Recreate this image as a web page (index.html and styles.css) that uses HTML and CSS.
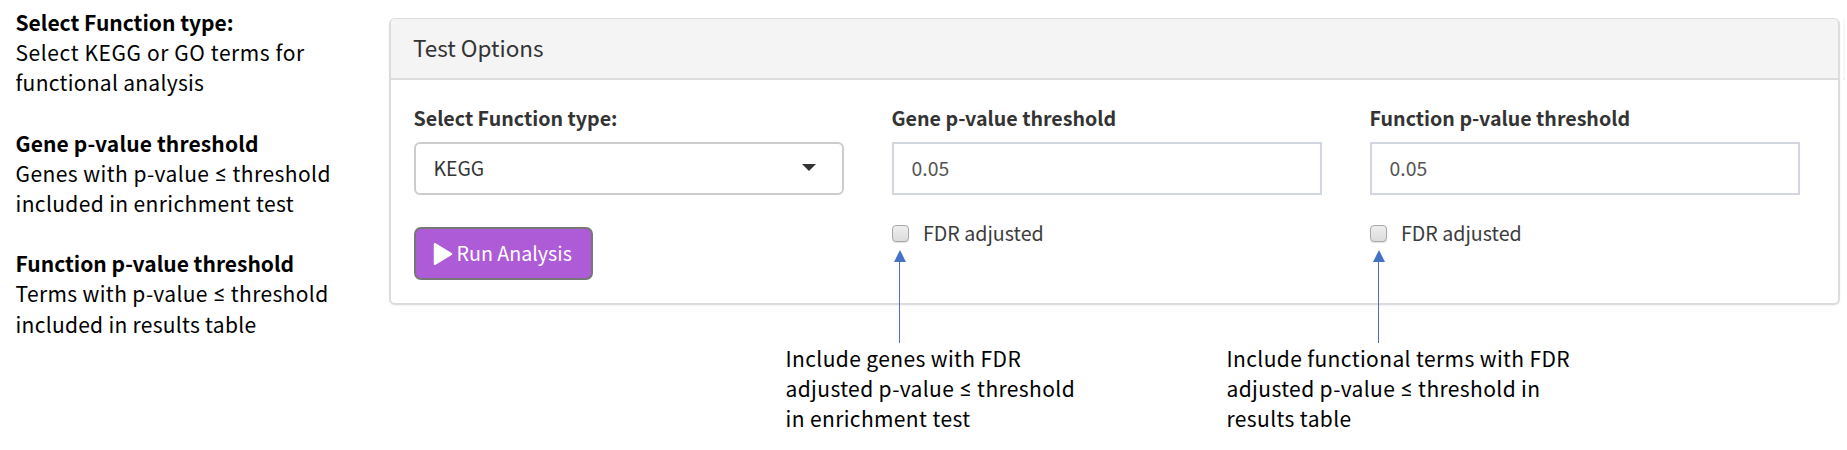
FILE: index.html
```html
<!DOCTYPE html>
<html lang="en">
<head>
<meta charset="utf-8">
<title>Test Options</title>
<link rel="stylesheet" href="styles.css">
</head>
<body>
<div class="page">
  <aside class="notes">
    <section class="note"><h2>Select Function type:</h2><p><span class="wide">Select KEGG or GO terms for</span><br><span class="snug">functional analysis</span></p></section>
    <section class="note"><h2 class="tight">Gene p-value threshold</h2><p><span class="roomy">Genes with p-value <b class="le">≤</b> threshold</span><br>included in enrichment test</p></section>
    <section class="note"><h2>Function p-value threshold</h2><p>Terms with p-value <b class="le">≤</b> threshold<br><span class="snug">included in results table</span></p></section>
  </aside>
  <main class="main">
    <section class="panel">
      <header class="panel-head"><span>Test Options</span></header>
      <div class="panel-body">
        <div class="field">
          <label class="label">Select Function type:</label>
          <div class="control select"><span>KEGG</span><i class="caret"></i></div>
          <button class="run"><svg class="play" viewBox="0 0 20 24"><path d="M2 2.2 18 12 2 21.8Z"/></svg><span>Run Analysis</span></button>
        </div>
        <div class="field">
          <label class="label">Gene p-value threshold</label>
          <div class="control value"><span>0.05</span></div>
          <div class="check"><i class="box"></i><span>FDR adjusted</span><i class="arrow"></i></div>
        </div>
        <div class="field">
          <label class="label">Function p-value threshold</label>
          <div class="control value"><span>0.05</span></div>
          <div class="check"><i class="box"></i><span>FDR adjusted</span><i class="arrow last"></i></div>
        </div>
      </div>
    </section>
    <div class="callouts">
      <p>Include genes with FDR<br>adjusted p-value <b class="le">≤</b> threshold<br>in enrichment test</p>
      <p>Include functional terms with FDR<br>adjusted p-value <b class="le">≤</b> threshold in<br>results table</p>
    </div>
  </main>
  <div class="edge"></div>
</div>
</body>
</html>
```
FILE: styles.css
```css
* { box-sizing: border-box; }
body { margin: 0; background: #fff; color: #000; font-family: "Noto Sans CJK SC", sans-serif; }
h2, p { margin: 0; }
.page { display: grid; grid-template-columns: 389px 1451px 2px; height: 450px; }
.notes { padding: 7px 0 0 15.5px; display: flex; flex-direction: column; gap: 30.4px; font-size: 21px; line-height: 30.1px; letter-spacing: .37px; white-space: nowrap; }
.note h2 { font-size: 21px; font-weight: 700; line-height: 30.1px; letter-spacing: 0; }
.note .tight { letter-spacing: .13px; }
.note .snug { letter-spacing: .28px; }
.wide { letter-spacing: .58px; }
.roomy { letter-spacing: .44px; }
.le { font-family: Lato, sans-serif; font-size: 23px; font-weight: 400; line-height: 1; }
.main { padding-top: 18px; }
.panel { height: 287px; border: 2px solid #dcdcdc; border-top-width: 1px; border-radius: 6px; color: #333; box-shadow: 0 1px 2px rgba(0,0,0,.05); }
.panel-head { height: 61px; display: flex; align-items: center; padding: 0 0 4px 22px; background: #f4f4f4; border-bottom: 2px solid #dcdcdc; border-radius: 4px 4px 0 0; font-size: 22.5px; }
.panel-body { display: grid; grid-template-columns: repeat(3, 430.5px); column-gap: 47.5px; padding: 24px 0 0 22.5px; font-size: 19.65px; }
.field { display: flex; flex-direction: column; align-items: flex-start; }
.label { font-weight: 700; line-height: 28px; margin-bottom: 10px; }
.control { width: 100%; height: 53px; display: flex; align-items: center; justify-content: space-between; padding: 0 26.5px 2px 18px; border: 2px solid #ccc; font-size: 19.4px; }
.select { border-radius: 6px; }
.value { border-color: #d2d6de; color: #555; }
.caret { border: 7px solid transparent; border-top-color: #333; border-bottom: 0; }
.run { margin-top: 32px; width: 179.5px; height: 53px; display: flex; align-items: center; gap: 4px; padding: 0 0 0 17px; border: 2px solid #777; border-radius: 7px; background: #ad5bd7; color: #fff; font: inherit; white-space: nowrap; }
.run span { padding-bottom: 2px; }
.play { width: 20px; height: 24px; fill: #fff; stroke: #fff; stroke-width: 2.5; stroke-linejoin: round; }
.check { position: relative; margin-top: 23px; height: 30px; display: flex; align-items: center; gap: 14.5px; color: #3c3c3c; }
.check span { padding-bottom: 1px; }
.box { width: 17px; height: 17px; border: 1.5px solid #a8a8a8; border-radius: 4px; background: linear-gradient(#eee, #dcdcdc); box-shadow: 0 1px 1px rgba(0,0,0,.12); }
.arrow { position: absolute; left: 7.5px; top: 44px; width: 1px; height: 81px; background: #4472c4; }
.arrow.last { left: 8.5px; }
.arrow::before { content: ""; position: absolute; left: -5.5px; top: -12px; border: 6px solid transparent; border-top: 0; border-bottom: 12px solid #4472c4; }
.callouts { display: grid; grid-template-columns: 441px 400px; padding: 38px 0 0 396.5px; font-size: 21px; line-height: 30.1px; letter-spacing: .38px; white-space: nowrap; }
.callouts .le, .notes .le { margin: 0 -.5px; }
.edge { width: 2px; height: 62px; margin: 18px 0 0 3px; background: #f8f8f8; border-bottom: 2px solid #eee; }
```
